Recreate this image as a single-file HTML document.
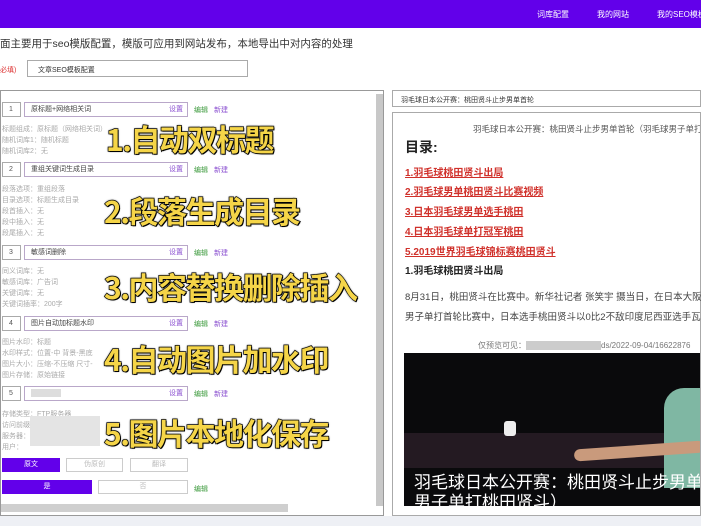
<!DOCTYPE html>
<html><head><meta charset="utf-8"><style>
*{margin:0;padding:0;box-sizing:border-box}
body{width:701px;height:526px;overflow:hidden;background:#fff;position:relative;font-family:"Liberation Sans","Noto Sans CJK SC",sans-serif;color:#333}
.a{position:absolute;white-space:nowrap}
.top{left:0;top:0;width:701px;height:28px;background:#6200ea}
.nav{color:#fff;font-size:8px;top:9px}
.box{position:absolute;border:1px solid #bbb;background:#fff}
.num{position:absolute;left:2px;width:19px;height:15px;border:1px solid #aaa;font-size:7px;line-height:13px;padding-left:6px;color:#555}
.nm{position:absolute;left:24px;width:164px;height:15px;border:1px solid #b9a7c9;font-size:7px;line-height:13px;padding-left:6px;color:#444}
.nm span{position:absolute;right:4px;color:#8a4fd0}
.g{color:#3c9a3c;font-size:7px}.p{color:#8a4fd0;font-size:7px}
.d{font-size:7px;color:#aaa;left:2px}
.big{font-size:30px;font-weight:bold;color:#f5d548;-webkit-text-stroke:1.5px #111;paint-order:stroke fill;text-shadow:0 0 2px #000,1px 1px 0 #000;font-family:"Noto Sans CJK SC","Liberation Sans",sans-serif;letter-spacing:-1.5px}
.lk{color:#d0302a;text-decoration:underline;font-weight:bold;font-size:10px;left:405px}
</style></head><body>
<div class="a top"></div>
<div class="a nav" style="left:537px">词库配置</div>
<div class="a nav" style="left:597px">我的网站</div>
<div class="a nav" style="left:657px">我的SEO模板</div>
<div class="a" style="left:0;top:36px;font-size:10.5px;color:#333">面主要用于seo模版配置，模版可应用到网站发布，本地导出中对内容的处理</div>
<div class="a" style="left:0;top:65px;font-size:7px;color:#d33">必填)</div>
<div class="box" style="left:27px;top:60px;width:221px;height:17px;border-color:#aaa"><span class="a" style="left:10px;top:4px;font-size:7px">文章SEO模板配置</span></div>
<div class="box" style="left:0;top:90px;width:384px;height:426px;border-color:#999">
<div class="a" style="left:375px;top:3px;width:7px;height:412px;background:#c8c8c8"></div>
<div class="a" style="left:0;top:413px;width:287px;height:8px;background:#cfcfcf"></div>
</div>
<div style="position:absolute;left:0;top:90px">
<div class="num" style="top:12px">1</div><div class="nm" style="top:12px">原标题+网络相关词<span>设置</span></div><span class="a g" style="left:194px;top:15px">编辑</span><span class="a p" style="left:214px;top:15px">新建</span>
<div class="a d" style="top:34px">标题组成：原标题（网络相关词）</div><div class="a d" style="top:45px">随机词库1：随机标题</div><div class="a d" style="top:56px">随机词库2：无</div>
<div class="num" style="top:72px">2</div><div class="nm" style="top:72px">重组关键词生成目录<span>设置</span></div><span class="a g" style="left:194px;top:75px">编辑</span><span class="a p" style="left:214px;top:75px">新建</span>
<div class="a d" style="top:94px">段落选项：重组段落</div><div class="a d" style="top:105px">目录选项：标题生成目录</div><div class="a d" style="top:116px">段首插入：无</div><div class="a d" style="top:127px">段中插入：无</div><div class="a d" style="top:138px">段尾插入：无</div>
<div class="num" style="top:155px">3</div><div class="nm" style="top:155px">敏感词删除<span>设置</span></div><span class="a g" style="left:194px;top:158px">编辑</span><span class="a p" style="left:214px;top:158px">新建</span>
<div class="a d" style="top:176px">同义词库：无</div><div class="a d" style="top:187px">敏感词库：广告词</div><div class="a d" style="top:198px">关键词库：无</div><div class="a d" style="top:209px">关键词插率：200字</div>
<div class="num" style="top:226px">4</div><div class="nm" style="top:226px">图片自动加标题水印<span>设置</span></div><span class="a g" style="left:194px;top:229px">编辑</span><span class="a p" style="left:214px;top:229px">新建</span>
<div class="a d" style="top:247px">图片水印：标题</div><div class="a d" style="top:258px">水印样式：位置-中 背景-黑底</div><div class="a d" style="top:269px">图片大小：压缩-不压缩 尺寸-</div><div class="a d" style="top:280px">图片存储：原始链接</div>
<div class="num" style="top:296px">5</div><div class="nm" style="top:296px"><b style="display:inline-block;width:30px;height:8px;background:#ddd;vertical-align:middle"></b><span>设置</span></div><span class="a g" style="left:194px;top:299px">编辑</span><span class="a p" style="left:214px;top:299px">新建</span>
<div class="a d" style="top:319px">存储类型：FTP服务器</div><div class="a d" style="top:330px">访问前缀</div><div class="a d" style="top:341px">服务器：</div><div class="a d" style="top:352px">用户：</div>
<div class="a" style="left:30px;top:326px;width:70px;height:30px;background:#e4e4e4"></div>
<div class="a" style="left:2px;top:368px;width:58px;height:14px;background:#6200ea;color:#fff;font-size:7px;text-align:center;line-height:14px">原文</div>
<div class="a" style="left:66px;top:368px;width:57px;height:14px;border:1px solid #ccc;color:#bbb;font-size:7px;text-align:center;line-height:12px">伪原创</div>
<div class="a" style="left:130px;top:368px;width:58px;height:14px;border:1px solid #ccc;color:#bbb;font-size:7px;text-align:center;line-height:12px">翻译</div>
<div class="a" style="left:2px;top:390px;width:90px;height:14px;background:#6200ea;color:#fff;font-size:7px;text-align:center;line-height:14px">是</div>
<div class="a" style="left:98px;top:390px;width:90px;height:14px;border:1px solid #ccc;color:#bbb;font-size:7px;text-align:center;line-height:12px">否</div>
<span class="a g" style="left:194px;top:394px">编辑</span>
</div>
<div class="a big" style="left:106px;top:116px">1.自动双标题</div>
<div class="a big" style="left:104px;top:188px">2.段落生成目录</div>
<div class="a big" style="left:104px;top:264px">3.内容替换删除插入</div>
<div class="a big" style="left:104px;top:336px">4.自动图片加水印</div>
<div class="a big" style="left:104px;top:410px">5.图片本地化保存</div>
<div class="box" style="left:392px;top:90px;width:309px;height:17px;border-color:#aaa"><span class="a" style="left:8px;top:4px;font-size:7px">羽毛球日本公开赛：桃田贤斗止步男单首轮</span></div>
<div class="box" style="left:392px;top:112px;width:309px;height:404px;border-color:#aaa;overflow:hidden">
<div class="a" style="left:80px;top:10px;font-size:8.5px;color:#555">羽毛球日本公开赛：桃田贤斗止步男单首轮（羽毛球男子单打桃田贤斗）</div>
<div class="a" style="left:12px;top:24px;font-size:14px;font-weight:bold;color:#222">目录:</div>
<div class="a" style="left:11px;top:240px;width:298px;height:153px;background:#0a0a0c;overflow:hidden">
<div class="a" style="left:0;top:80px;width:298px;height:35px;background:#241a22"></div>
<div class="a" style="left:260px;top:35px;width:40px;height:100px;background:#7fb7a3;border-radius:20px 0 0 0"></div>
<div class="a" style="left:170px;top:92px;width:130px;height:12px;background:#c99a7c;border-radius:6px;transform:rotate(-4deg)"></div>
<div class="a" style="left:100px;top:68px;width:12px;height:15px;background:#eee;border-radius:3px"></div>
<div class="a" style="left:10px;top:115px;font-size:17px;color:#fff;font-family:'Noto Sans CJK SC',sans-serif">羽毛球日本公开赛：桃田贤斗止步男单首轮（羽</div>
<div class="a" style="left:10px;top:135px;font-size:17px;color:#fff;font-family:'Noto Sans CJK SC',sans-serif">男子单打桃田贤斗）</div>
</div>
<div class="a" style="left:85px;top:227px;font-size:8px;color:#777">仅预览可见：<b style="display:inline-block;width:75px;height:9px;background:#ccc;vertical-align:middle"></b>ds/2022-09-04/16622876</div>
</div>
<div class="a lk" style="top:164px">1.羽毛球桃田贤斗出局</div>
<div class="a lk" style="top:183px">2.羽毛球男单桃田贤斗比赛视频</div>
<div class="a lk" style="top:203px">3.日本羽毛球男单选手桃田</div>
<div class="a lk" style="top:223px">4.日本羽毛球单打冠军桃田</div>
<div class="a lk" style="top:243px">5.2019世界羽毛球锦标赛桃田贤斗</div>
<div class="a" style="left:405px;top:262px;font-size:10px;font-weight:bold;color:#222">1.羽毛球桃田贤斗出局</div>
<div class="a" style="left:405px;top:289px;font-size:9.5px;color:#444">8月31日，桃田贤斗在比赛中。新华社记者 张笑宇 摄当日，在日本大阪</div>
<div class="a" style="left:405px;top:309px;font-size:9.5px;color:#444">男子单打首轮比赛中，日本选手桃田贤斗以0比2不敌印度尼西亚选手瓦</div>
<div class="a" style="left:0;top:516px;width:701px;height:10px;background:#eef0f5"></div>
</body></html>
